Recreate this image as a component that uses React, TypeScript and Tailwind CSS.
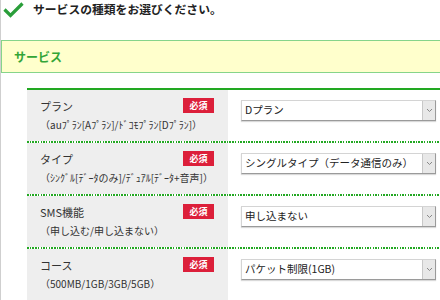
import React from "react";

const rows = [
  { label: "プラン", sub: "（auﾌﾟﾗﾝ[Aﾌﾟﾗﾝ]/ﾄﾞｺﾓﾌﾟﾗﾝ[Dﾌﾟﾗﾝ]）", value: "Dプラン" },
  { label: "タイプ", sub: "（ｼﾝｸﾞﾙ[ﾃﾞｰﾀのみ]/ﾃﾞｭｱﾙ[ﾃﾞｰﾀ+音声]）", value: "シングルタイプ（データ通信のみ）" },
  { label: "SMS機能", sub: "（申し込む/申し込まない）", value: "申し込まない" },
  { label: "コース", sub: "（500MB/1GB/3GB/5GB）", value: "パケット制限(1GB)" },
];

function Select({ value }: { value: string }) {
  return (
    <div className="flex w-[195px] h-[21px] bg-white border border-[#d4d4d4] border-b-[#9a9a9a] border-r-[#9a9a9a] shadow-[0_1px_1px_rgba(0,0,0,0.15)]">
      <div className="flex-1 flex items-center pl-[3px] text-[10.5px] text-[#222] leading-none whitespace-nowrap">{value}</div>
      <div className="w-[13px] flex items-center justify-center bg-[#e8e8e8] border-l border-[#c8c8c8]">
        <svg width="7" height="5" viewBox="0 0 7 5">
          <path d="M1 1 L3.5 3.5 L6 1" fill="none" stroke="#888" strokeWidth="1" />
        </svg>
      </div>
    </div>
  );
}

function Dotted() {
  return (
    <div className="h-[2px] w-full bg-[repeating-linear-gradient(90deg,#22a822_0_1.5px,transparent_1.5px_2.7px)]" />
  );
}

export default function App() {
  return (
    <div className="w-[440px] h-[300px] overflow-hidden bg-white border-l border-[#cfcfcf] font-['Noto_Sans_CJK_JP','Noto_Sans',sans-serif] text-[#333]">
      <div className="flex items-center h-[18px] pl-[2px]">
        <svg width="21" height="16" viewBox="0 0 21 16" className="mt-[1px]">
          <path d="M1.5 7.5 L7.5 13.5 L19.5 1.5" fill="none" stroke="#2a9e3a" strokeWidth="3.2" />
        </svg>
        <div className="ml-[9px] text-[11.8px] font-bold text-[#222] leading-none whitespace-nowrap">
          サービスの種類をお選びください。
        </div>
      </div>
      <div className="mt-[22px] w-[460px] h-[33px] border-[1.5px] border-[#86d48a] bg-[#ffffcc] flex items-center pl-[12px]">
        <span className="text-[12px] font-bold text-[#33a537] leading-none">サービス</span>
      </div>
      <div className="mt-[15px] ml-[26px] w-[440px] border-t-2 border-[#22a822]">
        {rows.map((r, i) => (
          <div key={i}>
            {i > 0 && <Dotted />}
            <div className="flex h-[51px]">
              <div className="w-[201px] shrink-0 bg-[#eeeeee] flex pl-[13px] pr-[14px]">
                <div className="flex-1 min-w-0 flex flex-col pt-[9px]">
                  <div className="text-[11px] leading-[14px] text-[#333] whitespace-nowrap">{r.label}</div>
                  <div className="mt-[5px] text-[10px] leading-[14px] text-[#333] whitespace-nowrap">{r.sub}</div>
                </div>
                <div className="shrink-0 mt-[8px] w-[31px] h-[15px] bg-[#dc1f3a] text-white text-[9px] font-bold flex items-center justify-center leading-none">
                  必須
                </div>
              </div>
              <div className="flex-1 bg-white pl-[13px] pt-[10px]">
                <Select value={r.value} />
              </div>
            </div>
          </div>
        ))}
      </div>
    </div>
  );
}
